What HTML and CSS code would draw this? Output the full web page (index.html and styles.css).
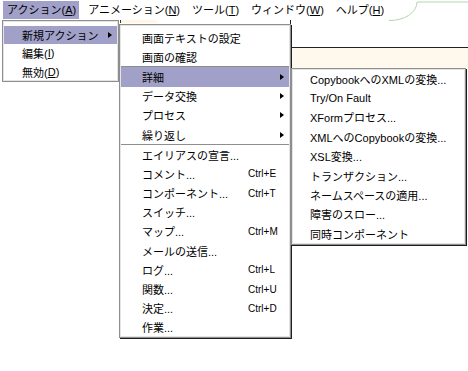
FILE: index.html
```html
<!DOCTYPE html>
<html lang="ja">
<head>
    <meta charset="UTF-8">
    <title>アクション</title>
    <link rel="stylesheet" href="styles.css">
</head>
<body>
    <!-- メニューバー -->
    <div class="menubar">
        <span class="bar-item on">アクション(<u>A</u>)</span>
        <span class="bar-item">アニメーション(<u>N</u>)</span>
        <span class="bar-item">ツール(<u>T</u>)</span>
        <span class="bar-item">ウィンドウ(<u>W</u>)</span>
        <span class="bar-item">ヘルプ(<u>H</u>)</span>
        <svg class="bar-deco" width="90" height="24" viewBox="0 0 90 24">
            <path d="M 9 20.5 A 27 18.5 0 0 0 37 2 L 90 2" fill="none" stroke="#b4d6b0" stroke-width="1"/>
        </svg>
    </div>

    <!-- 背面のウィンドウ -->
    <div class="desk">
        <div class="desk-top">
            <div class="desk-tab"></div>
            <div class="pane-head"></div>
        </div>
        <div class="pane-strip"></div>
    </div>

    <!-- アクション -->
    <div class="menu menu-action">
        <div class="item on">新規アクション<span class="arrow"></span></div>
        <div class="item">編集(<u>I</u>)</div>
        <div class="item">無効(<u>D</u>)</div>
    </div>

    <!-- 新規アクション -->
    <div class="menu menu-new">
        <div class="item">画面テキストの設定</div>
        <div class="item">画面の確認</div>
        <div class="sep"></div>
        <div class="item on">詳細<span class="arrow"></span></div>
        <div class="item">データ交換<span class="arrow"></span></div>
        <div class="item">プロセス<span class="arrow"></span></div>
        <div class="item">繰り返し<span class="arrow"></span></div>
        <div class="sep"></div>
        <div class="item">エイリアスの宣言...</div>
        <div class="item"><span class="label">コメント...</span><span class="key">Ctrl+E</span></div>
        <div class="item"><span class="label">コンポーネント...</span><span class="key">Ctrl+T</span></div>
        <div class="item">スイッチ...</div>
        <div class="item"><span class="label">マップ...</span><span class="key">Ctrl+M</span></div>
        <div class="item">メールの送信...</div>
        <div class="item"><span class="label">ログ...</span><span class="key">Ctrl+L</span></div>
        <div class="item"><span class="label">関数...</span><span class="key">Ctrl+U</span></div>
        <div class="item"><span class="label">決定...</span><span class="key">Ctrl+D</span></div>
        <div class="item">作業...</div>
    </div>

    <!-- 詳細 -->
    <div class="menu menu-detail">
        <div class="item">CopybookへのXMLの変換...</div>
        <div class="item">Try/On Fault</div>
        <div class="item">XFormプロセス...</div>
        <div class="item">XMLへのCopybookの変換...</div>
        <div class="item">XSL変換...</div>
        <div class="item">トランザクション...</div>
        <div class="item">ネームスペースの適用...</div>
        <div class="item">障害のスロー...</div>
        <div class="item">同時コンポーネント</div>
    </div>
</body>
</html>
```

FILE: styles.css
```css
* { margin: 0; padding: 0; box-sizing: border-box; }
body {
    font-family: "Liberation Sans", "Noto Sans CJK JP", sans-serif;
    font-size: 11px; color: #000; background: #fff;
    width: 468px; height: 371px; overflow: hidden; position: relative;
}
u { text-decoration: underline; text-underline-offset: 1px; }

.menubar {
    position: relative; display: flex; gap: 5px;
    height: 20px; padding: 1px 0 0 3px;
}
.bar-item { height: 18px; line-height: 18px; padding: 0 3px 0 4px; white-space: nowrap; }
.bar-item.on { background: #a0a0c8; }
.bar-deco { position: absolute; left: 380px; top: 0; }

.desk-top { display: flex; align-items: flex-start; padding-left: 120px; }
.desk-tab { width: 37px; height: 3px; border-left: 1px solid #333; background: #fff6e6; }
.pane-head {
    margin-left: auto; width: 178px; height: 28px;
    border-left: 1px solid #222; border-bottom: 1px solid #222;
}
.pane-strip { margin-left: 291px; height: 20px; background: #fff8ec; }

.menu {
    position: absolute; background: #fff;
    border: 1px solid #8e8e8e; box-shadow: inset 0 0 0 1px #e4e4e4;
    padding: 0 1px;
}
.menu-action { left: 2px; top: 20px; width: 117px; padding-top: 5px; }
.menu-action .item { height: 18.3px; padding-left: 18px; }
.menu-new {
    left: 119px; top: 24px; width: 172px; padding-top: 3px;
    box-shadow: inset 0 0 0 1px #e4e4e4, 1px 1px 0 #1e1e1e;
}
.menu-new .item { height: 19.2px; padding-left: 21px; }
.menu-detail {
    left: 291px; top: 68px; width: 175px;
    box-shadow: inset 0 0 0 1px #e4e4e4, 1px 1px 0 #1e1e1e;
}
.menu-detail .item { height: 19.4px; padding-left: 17px; }

.item { display: flex; align-items: center; white-space: nowrap; }
.item.on { background: #a0a0c8; }
.label { flex: 1; }
.key { width: 41px; font-size: 10px; }
.arrow {
    margin-left: auto; margin-right: 5px; width: 0; height: 0;
    border-left: 4px solid #000; border-top: 3.5px solid transparent; border-bottom: 3.5px solid transparent;
}
.sep { height: 1px; background: #8e8e8e; }
```
